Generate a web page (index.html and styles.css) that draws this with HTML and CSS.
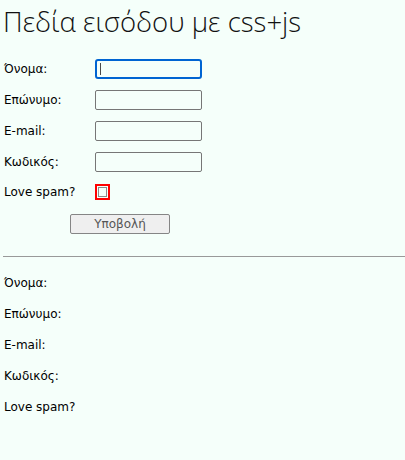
FILE: index.html
```html
<!DOCTYPE html>
<html lang="el">
<head>
<meta charset="utf-8">
<title>Πεδία εισόδου</title>
<link rel="stylesheet" href="styles.css">
</head>
<body>
<h1 class="title">Πεδία εισόδου με css+js</h1>
<form class="form">
  <div class="row"><label class="lbl" for="fn">Όνομα:</label><input class="field field-focus" id="fn" type="text"></div>
  <div class="row"><label class="lbl" for="ln">Επώνυμο:</label><input class="field" id="ln" type="text"></div>
  <div class="row"><label class="lbl" for="em">E-mail:</label><input class="field" id="em" type="text"></div>
  <div class="row"><label class="lbl" for="pw">Κωδικός:</label><input class="field" id="pw" type="password"></div>
  <div class="row row-check"><label class="lbl" for="sp">Love spam?</label><input class="spam" id="sp" type="checkbox"></div>
  <div class="row-btn"><button class="submit" type="button">Υποβολή</button></div>
</form>
<hr class="sep">
<div class="out">
  <div class="orow">Όνομα:</div>
  <div class="orow">Επώνυμο:</div>
  <div class="orow">E-mail:</div>
  <div class="orow">Κωδικός:</div>
  <div class="orow">Love spam?</div>
</div>
</body>
</html>
```
FILE: styles.css
```css
html, body {
  margin: 0;
  padding: 0;
  background: #f5fffa;
}
body {
  padding-left: 3px;
  font-family: "DejaVu Sans", sans-serif;
  font-size: 12px;
  color: #000;
}
.title {
  margin: 3px 0 0;
  font-family: "Open Sans", sans-serif;
  font-weight: 300;
  font-size: 27.5px;
  line-height: 37px;
  color: #111;
}
.form {
  margin-top: 19px;
  display: flex;
  flex-direction: column;
}
.row {
  display: flex;
  align-items: center;
  height: 20px;
  margin-bottom: 11px;
}
.lbl {
  width: 92px;
  padding-left: 1px;
  box-sizing: border-box;
}
.field {
  box-sizing: border-box;
  width: 107px;
  height: 20px;
  margin: 0;
  padding: 1px 3px;
  border: 1px solid #767676;
  border-radius: 2px;
  background: #f5fffa;
  font-family: "DejaVu Sans", sans-serif;
  font-size: 12px;
}
.field-focus, .field:focus {
  border: 2px solid #0064d2;
  border-radius: 3px;
  outline: none;
  background-image: linear-gradient(#4a4a4a, #4a4a4a);
  background-size: 1px 12px;
  background-position: 3px center;
  background-repeat: no-repeat;
}
.row-check {
  height: 16px;
  margin-top: 1px;
  margin-bottom: 0;
}
.spam {
  appearance: none;
  -webkit-appearance: none;
  box-sizing: border-box;
  width: 15px;
  height: 16px;
  margin: 0;
  border: 2px solid #f00;
  background: #f5fffa;
  box-shadow: inset 0 0 0 1px #f5fffa, inset 0 0 0 2px #8a8a8a;
}
.row-btn {
  margin-top: 14px;
  padding-left: 67px;
}
.submit {
  box-sizing: border-box;
  width: 100px;
  height: 20px;
  margin: 0;
  padding: 0;
  border: 1px solid #858585;
  border-radius: 2px;
  background: #efefef;
  color: #555;
  font-family: "DejaVu Sans", sans-serif;
  font-size: 12px;
}
.sep {
  margin: 22px 0 0;
  border: 0;
  border-top: 1px solid #999;
  height: 0;
}
.out {
  margin-top: 16px;
  display: flex;
  flex-direction: column;
  gap: 11px;
}
.orow {
  height: 20px;
  line-height: 20px;
  padding-left: 1px;
}
```
